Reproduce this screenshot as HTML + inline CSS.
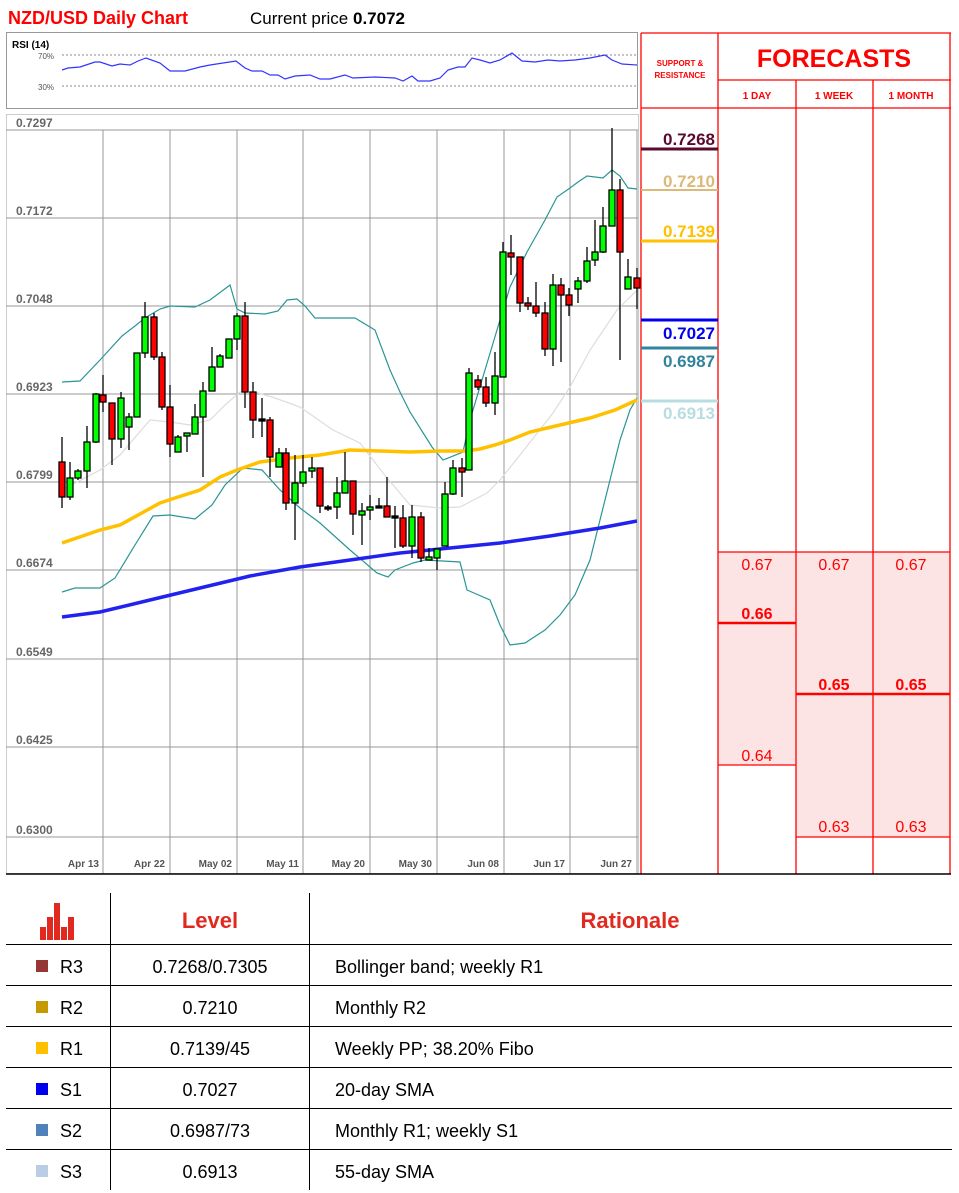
<!DOCTYPE html>
<html><head><meta charset="utf-8"><style>
html,body{margin:0;padding:0;background:#fff;}
svg{display:block;font-family:"Liberation Sans",sans-serif;}
</style></head><body>
<svg width="959" height="1193" viewBox="0 0 959 1193" xmlns="http://www.w3.org/2000/svg">
<rect width="959" height="1193" fill="#fff"/>
<text x="8" y="24" font-size="18" font-weight="bold" fill="#ff0000">NZD/USD Daily Chart</text>
<text x="250" y="24" font-size="17" fill="#000">Current price <tspan font-weight="bold">0.7072</tspan></text>

<rect x="6.5" y="32.5" width="631" height="76" fill="#fff" stroke="#999"/>
<text x="12" y="48" font-size="10" font-weight="bold" fill="#000">RSI (14)</text>
<line x1="62" y1="55" x2="637" y2="55" stroke="#888" stroke-dasharray="2,2"/>
<line x1="62" y1="86" x2="637" y2="86" stroke="#888" stroke-dasharray="2,2"/>
<text x="38" y="59" font-size="8" fill="#555">70%</text>
<text x="38" y="90" font-size="8" fill="#555">30%</text>
<polyline fill="none" stroke="#3333ff" stroke-width="1.2" points="62,70 68,68 80,67 95,62 100,62 112,66 120,64 130,65 138,61 146,58 160,63 170,71 185,71 200,67 210,65 236,61 245,68 252,71 262,71 270,75 278,75 285,79 295,76 310,75 320,79 330,79 345,75 353,78 375,77 395,78 403,81 412,76 418,81 430,81 440,78 448,70 458,67 465,67 472,58 480,60 490,63 500,60 512,53 522,61 535,62 548,60 560,61 575,60 590,58 605,55 612,60 622,64 637,65"/>

<rect x="6.5" y="114.5" width="632" height="759" fill="#fff" stroke="#ccc"/>
<g stroke="#999" stroke-width="1">
<line x1="6" y1="130" x2="638" y2="130"/><line x1="6" y1="218" x2="638" y2="218"/><line x1="6" y1="306" x2="638" y2="306"/><line x1="6" y1="394" x2="638" y2="394"/><line x1="6" y1="482" x2="638" y2="482"/><line x1="6" y1="570" x2="638" y2="570"/><line x1="6" y1="659" x2="638" y2="659"/><line x1="6" y1="747" x2="638" y2="747"/><line x1="6" y1="837" x2="638" y2="837"/>
<line x1="103" y1="130" x2="103" y2="874"/><line x1="170" y1="130" x2="170" y2="874"/><line x1="237" y1="130" x2="237" y2="874"/><line x1="303" y1="130" x2="303" y2="874"/><line x1="370" y1="130" x2="370" y2="874"/><line x1="437" y1="130" x2="437" y2="874"/><line x1="504" y1="130" x2="504" y2="874"/><line x1="570" y1="130" x2="570" y2="874"/><line x1="637" y1="130" x2="637" y2="874"/>
</g>
<g font-size="12" font-weight="bold" fill="#666">
<text x="16" y="127">0.7297</text><text x="16" y="215">0.7172</text><text x="16" y="303">0.7048</text><text x="16" y="391">0.6923</text><text x="16" y="479">0.6799</text><text x="16" y="567">0.6674</text><text x="16" y="656">0.6549</text><text x="16" y="744">0.6425</text><text x="16" y="834">0.6300</text>
</g>
<g font-size="10" font-weight="bold" fill="#555" text-anchor="end">
<text x="99" y="867">Apr 13</text><text x="165" y="867">Apr 22</text><text x="232" y="867">May 02</text><text x="299" y="867">May 11</text><text x="365" y="867">May 20</text><text x="432" y="867">May 30</text><text x="499" y="867">Jun 08</text><text x="565" y="867">Jun 17</text><text x="632" y="867">Jun 27</text>
</g>

<polyline fill="none" stroke="#ddd" stroke-width="1.2" points="62,490 100,470 120,455 150,420 170,422 190,425 210,420 225,405 240,392 255,392 275,398 300,407 333,430 360,443 383,473 410,505 440,508 460,507 487,493 500,480 520,455 553,413 570,387 590,350 617,310 637,290"/>
<polyline fill="none" stroke="#2a9595" stroke-width="1.2" points="62,382 80,381 100,360 122,336 135,326 145,318 160,309 170,306 195,307 210,300 230,285 237,309 245,313 265,314 278,311 287,300 297,299 305,306 315,318 355,318 375,330 390,370 400,392 410,412 432,447 443,460 463,452 470,420 485,370 500,320 510,287 527,252 545,220 557,197 570,188 578,182 587,176 603,178 612,170 620,176 628,188 637,189"/>
<polyline fill="none" stroke="#2a9595" stroke-width="1.2" points="62,592 75,588 100,588 115,578 135,545 153,516 170,515 195,519 212,505 225,485 243,468 262,470 280,490 300,508 320,523 350,550 377,573 388,577 395,570 413,563 425,560 460,562 467,590 490,600 500,625 510,645 525,643 545,630 560,615 575,595 590,560 600,520 610,480 620,440 630,410 637,398"/>
<polyline fill="none" stroke="#ffc000" stroke-width="3.5" points="62,543 100,530 120,525 160,503 175,498 200,490 220,477 237,470 260,462 290,458 320,455 350,450 380,451 410,452 440,451 465,451 480,449 495,445 510,440 530,432 560,425 590,418 615,410 637,400"/>
<polyline fill="none" stroke="#2222ee" stroke-width="3.5" points="62,617 100,612 150,600 200,588 250,576 300,567 350,560 400,553 450,548 500,543 550,536 600,528 637,521"/>

<g stroke="#000" stroke-width="1.3">
<line x1="62" y1="437" x2="62" y2="508"/><rect x="59" y="462" width="6" height="35" fill="#f00"/>
<line x1="70" y1="462" x2="70" y2="500"/><rect x="67" y="478" width="6" height="19" fill="#0f0"/>
<line x1="78" y1="469" x2="78" y2="480"/><rect x="75" y="471" width="6" height="7" fill="#0f0"/>
<line x1="87" y1="426" x2="87" y2="488"/><rect x="84" y="442" width="6" height="29" fill="#0f0"/>
<line x1="96" y1="393" x2="96" y2="443"/><rect x="93" y="394" width="6" height="48" fill="#0f0"/>
<line x1="103" y1="375" x2="103" y2="412"/><rect x="100" y="395" width="6" height="7" fill="#f00"/>
<line x1="112" y1="403" x2="112" y2="465"/><rect x="109" y="403" width="6" height="36" fill="#f00"/>
<line x1="121" y1="392" x2="121" y2="448"/><rect x="118" y="398" width="6" height="41" fill="#0f0"/>
<line x1="129" y1="413" x2="129" y2="450"/><rect x="126" y="417" width="6" height="10" fill="#0f0"/>
<line x1="137" y1="353" x2="137" y2="417"/><rect x="134" y="353" width="6" height="64" fill="#0f0"/>
<line x1="145" y1="302" x2="145" y2="358"/><rect x="142" y="317" width="6" height="36" fill="#0f0"/>
<line x1="154" y1="313" x2="154" y2="360"/><rect x="151" y="317" width="6" height="40" fill="#f00"/>
<line x1="162" y1="352" x2="162" y2="410"/><rect x="159" y="357" width="6" height="50" fill="#f00"/>
<line x1="170" y1="385" x2="170" y2="457"/><rect x="167" y="407" width="6" height="37" fill="#f00"/>
<line x1="178" y1="435" x2="178" y2="452"/><rect x="175" y="437" width="6" height="15" fill="#0f0"/>
<line x1="187" y1="433" x2="187" y2="452"/><rect x="184" y="433" width="6" height="3" fill="#0f0"/>
<line x1="195" y1="404" x2="195" y2="434"/><rect x="192" y="417" width="6" height="17" fill="#0f0"/>
<line x1="203" y1="382" x2="203" y2="477"/><rect x="200" y="391" width="6" height="26" fill="#0f0"/>
<line x1="212" y1="347" x2="212" y2="391"/><rect x="209" y="367" width="6" height="24" fill="#0f0"/>
<line x1="220" y1="354" x2="220" y2="367"/><rect x="217" y="356" width="6" height="11" fill="#0f0"/>
<line x1="229" y1="339" x2="229" y2="358"/><rect x="226" y="339" width="6" height="19" fill="#0f0"/>
<line x1="237" y1="313" x2="237" y2="350"/><rect x="234" y="316" width="6" height="23" fill="#0f0"/>
<line x1="245" y1="302" x2="245" y2="408"/><rect x="242" y="316" width="6" height="76" fill="#f00"/>
<line x1="253" y1="382" x2="253" y2="438"/><rect x="250" y="392" width="6" height="28" fill="#f00"/>
<line x1="262" y1="398" x2="262" y2="437"/><rect x="259" y="419" width="6" height="2" fill="#000"/>
<line x1="270" y1="417" x2="270" y2="477"/><rect x="267" y="420" width="6" height="37" fill="#f00"/>
<line x1="279" y1="448" x2="279" y2="467"/><rect x="276" y="453" width="6" height="14" fill="#0f0"/>
<line x1="286" y1="448" x2="286" y2="510"/><rect x="283" y="453" width="6" height="50" fill="#f00"/>
<line x1="295" y1="455" x2="295" y2="540"/><rect x="292" y="483" width="6" height="20" fill="#0f0"/>
<line x1="303" y1="455" x2="303" y2="487"/><rect x="300" y="472" width="6" height="11" fill="#0f0"/>
<line x1="312" y1="457" x2="312" y2="478"/><rect x="309" y="468" width="6" height="3" fill="#0f0"/>
<line x1="320" y1="468" x2="320" y2="513"/><rect x="317" y="468" width="6" height="38" fill="#f00"/>
<line x1="328" y1="505" x2="328" y2="511"/><rect x="325" y="507" width="6" height="2" fill="#000"/>
<line x1="337" y1="477" x2="337" y2="519"/><rect x="334" y="493" width="6" height="14" fill="#0f0"/>
<line x1="345" y1="452" x2="345" y2="493"/><rect x="342" y="481" width="6" height="12" fill="#0f0"/>
<line x1="353" y1="481" x2="353" y2="535"/><rect x="350" y="481" width="6" height="33" fill="#f00"/>
<line x1="362" y1="503" x2="362" y2="545"/><rect x="359" y="511" width="6" height="4" fill="#0f0"/>
<line x1="370" y1="495" x2="370" y2="520"/><rect x="367" y="507" width="6" height="3" fill="#0f0"/>
<line x1="379" y1="498" x2="379" y2="508"/><rect x="376" y="506" width="6" height="2" fill="#000"/>
<line x1="387" y1="477" x2="387" y2="517"/><rect x="384" y="506" width="6" height="11" fill="#f00"/>
<line x1="395" y1="506" x2="395" y2="548"/><rect x="392" y="516" width="6" height="2" fill="#000"/>
<line x1="403" y1="505" x2="403" y2="548"/><rect x="400" y="518" width="6" height="28" fill="#f00"/>
<line x1="412" y1="505" x2="412" y2="558"/><rect x="409" y="517" width="6" height="29" fill="#0f0"/>
<line x1="421" y1="512" x2="421" y2="562"/><rect x="418" y="517" width="6" height="41" fill="#f00"/>
<line x1="429" y1="548" x2="429" y2="560"/><rect x="426" y="557" width="6" height="3" fill="#0f0"/>
<line x1="437" y1="549" x2="437" y2="570"/><rect x="434" y="549" width="6" height="9" fill="#0f0"/>
<line x1="445" y1="482" x2="445" y2="546"/><rect x="442" y="494" width="6" height="52" fill="#0f0"/>
<line x1="453" y1="460" x2="453" y2="495"/><rect x="450" y="468" width="6" height="26" fill="#0f0"/>
<line x1="462" y1="458" x2="462" y2="497"/><rect x="459" y="468" width="6" height="4" fill="#f00"/>
<line x1="469" y1="368" x2="469" y2="470"/><rect x="466" y="373" width="6" height="97" fill="#0f0"/>
<line x1="478" y1="375" x2="478" y2="390"/><rect x="475" y="380" width="6" height="7" fill="#f00"/>
<line x1="486" y1="377" x2="486" y2="407"/><rect x="483" y="387" width="6" height="16" fill="#f00"/>
<line x1="495" y1="352" x2="495" y2="415"/><rect x="492" y="376" width="6" height="27" fill="#0f0"/>
<line x1="503" y1="242" x2="503" y2="377"/><rect x="500" y="252" width="6" height="125" fill="#0f0"/>
<line x1="511" y1="235" x2="511" y2="275"/><rect x="508" y="253" width="6" height="4" fill="#f00"/>
<line x1="520" y1="257" x2="520" y2="312"/><rect x="517" y="257" width="6" height="46" fill="#f00"/>
<line x1="528" y1="297" x2="528" y2="310"/><rect x="525" y="303" width="6" height="3" fill="#f00"/>
<line x1="536" y1="282" x2="536" y2="317"/><rect x="533" y="306" width="6" height="7" fill="#f00"/>
<line x1="545" y1="302" x2="545" y2="356"/><rect x="542" y="313" width="6" height="36" fill="#f00"/>
<line x1="553" y1="274" x2="553" y2="366"/><rect x="550" y="285" width="6" height="64" fill="#0f0"/>
<line x1="561" y1="278" x2="561" y2="362"/><rect x="558" y="285" width="6" height="10" fill="#f00"/>
<line x1="569" y1="288" x2="569" y2="316"/><rect x="566" y="295" width="6" height="10" fill="#f00"/>
<line x1="578" y1="277" x2="578" y2="303"/><rect x="575" y="281" width="6" height="8" fill="#0f0"/>
<line x1="587" y1="247" x2="587" y2="283"/><rect x="584" y="261" width="6" height="20" fill="#0f0"/>
<line x1="595" y1="220" x2="595" y2="266"/><rect x="592" y="252" width="6" height="8" fill="#0f0"/>
<line x1="603" y1="207" x2="603" y2="253"/><rect x="600" y="226" width="6" height="26" fill="#0f0"/>
<line x1="612" y1="128" x2="612" y2="226"/><rect x="609" y="190" width="6" height="36" fill="#0f0"/>
<line x1="620" y1="179" x2="620" y2="360"/><rect x="617" y="190" width="6" height="62" fill="#f00"/>
<line x1="628" y1="259" x2="628" y2="289"/><rect x="625" y="277" width="6" height="12" fill="#0f0"/>
<line x1="637" y1="268" x2="637" y2="309"/><rect x="634" y="278" width="6" height="10" fill="#f00"/>
</g>

<rect x="718" y="552" width="78" height="213" fill="#fde4e4"/>
<rect x="796" y="552" width="154" height="285" fill="#fde4e4"/>
<g stroke="#ff0000" stroke-width="1.3">
<line x1="641" y1="33" x2="951" y2="33"/>
<line x1="718" y1="80" x2="951" y2="80"/>
<line x1="641" y1="108" x2="951" y2="108"/>
<line x1="641" y1="33" x2="641" y2="874"/>
<line x1="718" y1="33" x2="718" y2="874"/>
<line x1="796" y1="80" x2="796" y2="874"/>
<line x1="873" y1="80" x2="873" y2="874"/>
<line x1="950" y1="33" x2="950" y2="874"/>
<line x1="718" y1="552" x2="950" y2="552"/>
<line x1="718" y1="765" x2="796" y2="765"/>
<line x1="796" y1="837" x2="950" y2="837"/>
</g>
<line x1="718" y1="623" x2="796" y2="623" stroke="#f00" stroke-width="2.5"/>
<line x1="796" y1="694" x2="950" y2="694" stroke="#f00" stroke-width="2.5"/>
<line x1="6" y1="874" x2="951" y2="874" stroke="#000" stroke-width="1.5"/>

<g fill="#ff0000" font-weight="bold" text-anchor="middle">
<text x="680" y="66" font-size="8">SUPPORT &amp;</text>
<text x="680" y="78" font-size="8">RESISTANCE</text>
<text x="834" y="67" font-size="25">FORECASTS</text>
<text x="757" y="99" font-size="10">1 DAY</text>
<text x="834" y="99" font-size="10">1 WEEK</text>
<text x="911" y="99" font-size="10">1 MONTH</text>
</g>
<line x1="641" y1="149" x2="718" y2="149" stroke="#5a0a2e" stroke-width="3"/>
<line x1="641" y1="190" x2="718" y2="190" stroke="#dcb978" stroke-width="2"/>
<line x1="641" y1="241" x2="718" y2="241" stroke="#ffc000" stroke-width="3"/>
<line x1="641" y1="320" x2="718" y2="320" stroke="#0000ee" stroke-width="3"/>
<line x1="641" y1="348" x2="718" y2="348" stroke="#31849b" stroke-width="3"/>
<line x1="641" y1="401" x2="718" y2="401" stroke="#b7dde0" stroke-width="3"/>
<g font-size="17" font-weight="bold" text-anchor="end">
<text x="715" y="145" fill="#5a0a2e">0.7268</text>
<text x="715" y="187" fill="#dcb978">0.7210</text>
<text x="715" y="237" fill="#ffc000">0.7139</text>
<text x="715" y="339" fill="#0000ee">0.7027</text>
<text x="715" y="367" fill="#31849b">0.6987</text>
<text x="715" y="419" fill="#b7dde0">0.6913</text>
</g>
<g font-size="16" fill="#ff0000" text-anchor="middle">
<text x="757" y="570">0.67</text><text x="834" y="570">0.67</text><text x="911" y="570">0.67</text>
<text x="757" y="619" font-weight="bold">0.66</text>
<text x="834" y="690" font-weight="bold">0.65</text><text x="911" y="690" font-weight="bold">0.65</text>
<text x="757" y="761">0.64</text>
<text x="834" y="832">0.63</text><text x="911" y="832">0.63</text>
</g>

<g fill="#e02a20">
<rect x="40" y="927" width="6" height="13"/><rect x="47" y="917" width="6" height="23"/><rect x="54" y="903" width="6" height="37"/><rect x="61" y="927" width="6" height="13"/><rect x="68" y="917" width="6" height="23"/>
</g>
<g stroke="#000" stroke-width="1">
<line x1="110.5" y1="893" x2="110.5" y2="1190"/>
<line x1="309.5" y1="893" x2="309.5" y2="1190"/>
<line x1="6" y1="944.5" x2="952" y2="944.5"/>
<line x1="6" y1="985.5" x2="952" y2="985.5"/>
<line x1="6" y1="1026.5" x2="952" y2="1026.5"/>
<line x1="6" y1="1067.5" x2="952" y2="1067.5"/>
<line x1="6" y1="1108.5" x2="952" y2="1108.5"/>
<line x1="6" y1="1149.5" x2="952" y2="1149.5"/>
</g>
<g font-size="22" font-weight="bold" fill="#e02a20" text-anchor="middle">
<text x="210" y="928">Level</text>
<text x="630" y="928">Rationale</text>
</g>
<rect x="36" y="960" width="12" height="12" fill="#953735"/>
<rect x="36" y="1001" width="12" height="12" fill="#c49a00"/>
<rect x="36" y="1042" width="12" height="12" fill="#ffc000"/>
<rect x="36" y="1083" width="12" height="12" fill="#0000ee"/>
<rect x="36" y="1124" width="12" height="12" fill="#4f81bd"/>
<rect x="36" y="1165" width="12" height="12" fill="#b9cde5"/>
<g font-size="18" fill="#000">
<text x="60" y="973">R3</text><text x="60" y="1014">R2</text><text x="60" y="1055">R1</text><text x="60" y="1096">S1</text><text x="60" y="1137">S2</text><text x="60" y="1178">S3</text>
<g text-anchor="middle">
<text x="210" y="973">0.7268/0.7305</text><text x="210" y="1014">0.7210</text><text x="210" y="1055">0.7139/45</text><text x="210" y="1096">0.7027</text><text x="210" y="1137">0.6987/73</text><text x="210" y="1178">0.6913</text>
</g>
<text x="335" y="973">Bollinger band; weekly R1</text>
<text x="335" y="1014">Monthly R2</text>
<text x="335" y="1055">Weekly PP; 38.20% Fibo</text>
<text x="335" y="1096">20-day SMA</text>
<text x="335" y="1137">Monthly R1; weekly S1</text>
<text x="335" y="1178">55-day SMA</text>
</g>
</svg>
</body></html>
